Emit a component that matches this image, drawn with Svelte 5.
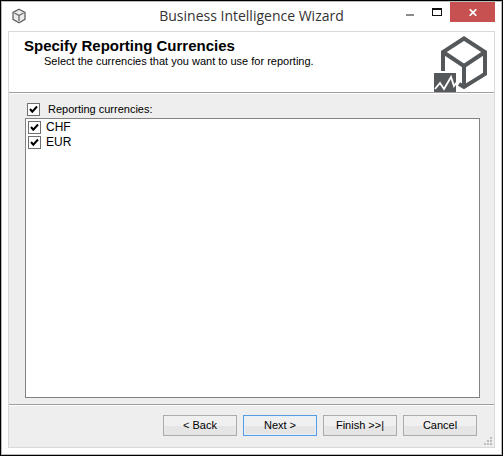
<script>
  let currencies = $state([
    { code: 'CHF', checked: true },
    { code: 'EUR', checked: true }
  ]);
  let useReporting = $state(true);
</script>

<div class="window">
  <header class="titlebar">
    <svg class="app-icon" width="14" height="16" viewBox="0 0 14 16" aria-hidden="true">
      <path d="M7 1.2 13 4.4V11.4L7 14.8 1 11.4V4.4Z" fill="#ececec" stroke="#606060" stroke-width="1.3" />
      <path d="M2.5 5 7 7.5 11.5 5M7 7.5V13" fill="none" stroke="#686868" stroke-width="1.3" />
    </svg>
    <h1>Business Intelligence Wizard</h1>
    <div class="controls">
      <button class="ctl min" aria-label="Minimize">
        <svg width="8" height="2" viewBox="0 0 8 2"><rect width="8" height="2" fill="#8c8c8c" /></svg>
      </button>
      <button class="ctl max" aria-label="Maximize">
        <svg width="10" height="8" viewBox="0 0 10 8"><path d="M0 0H10V8H0ZM1 2V7H9V2Z" fill="#111" fill-rule="evenodd" /></svg>
      </button>
      <button class="ctl close" aria-label="Close">
        <svg width="8" height="7" viewBox="0 0 8 7"><path d="M.7.2 7.3 6.8M7.3.2.7 6.8" stroke="#fff" stroke-width="1.7" /></svg>
      </button>
    </div>
  </header>

  <main class="frame">
    <section class="banner">
      <div class="heading">
        <h2>Specify Reporting Currencies</h2>
        <p>Select the currencies that you want to use for reporting.</p>
      </div>
      <svg class="logo" width="54" height="56" viewBox="0 0 54 56" aria-hidden="true">
        <path d="M9 35V16L30 2.5 51 16V38L30 51 25 48" fill="none" stroke="#54585a" stroke-width="4" />
        <path d="M9 16 30 30 51 16M30 30V51" fill="none" stroke="#54585a" stroke-width="4" />
        <rect x="0" y="35" width="24" height="21" fill="#fff" />
        <rect x="0" y="37" width="22" height="19" fill="#54585a" />
        <path d="M1 53 6 47 10 53 17 41 20 50 23 46" fill="none" stroke="#fff" stroke-width="1.8" />
      </svg>
    </section>

    <section class="content">
      <label class="row all">
        <input type="checkbox" bind:checked={useReporting} />
        <span>Reporting currencies:</span>
      </label>
      <div class="list">
        {#each currencies as currency}
          <label class="row">
            <input type="checkbox" bind:checked={currency.checked} />
            <span>{currency.code}</span>
          </label>
        {/each}
      </div>
    </section>

    <footer class="actions">
      <button class="btn">&lt; Back</button>
      <button class="btn default">Next &gt;</button>
      <button class="btn">Finish &gt;&gt;|</button>
      <button class="btn">Cancel</button>
      <svg class="grip" width="8" height="8" viewBox="0 0 8 8" aria-hidden="true">
        <path d="M6 0h2v2h-2zM3 3h2v2h-2zM6 3h2v2h-2zM0 6h2v2h-2zM3 6h2v2h-2zM6 6h2v2h-2z" fill="#bdbdbd" />
      </svg>
    </footer>
  </main>
</div>

<style>
  :global(body) {
    margin: 0;
    background: #000;
  }
  .window {
    box-sizing: border-box;
    min-height: 100vh;
    display: flex;
    flex-direction: column;
    padding: 0 6px 7px;
    border: 1px solid #000;
    outline: 1px solid #b9b9b9;
    outline-offset: -2px;
    background: #fff;
    color: #000;
    font: 11px/15px "Liberation Sans", Arial, sans-serif;
  }
  .titlebar {
    display: grid;
    grid-template-columns: 104px 1fr 104px;
    height: 30px;
  }
  .app-icon {
    margin: 7px 0 0 5px;
  }
  h1 {
    margin: 0;
    padding-top: 4px;
    text-align: center;
    white-space: nowrap;
    color: #333;
    font: 14px/22px "Open Sans", "Segoe UI", sans-serif;
  }
  .controls {
    display: flex;
    justify-content: flex-end;
    align-items: flex-start;
    padding: 1px 1px 0 0;
  }
  .ctl {
    display: flex;
    align-items: center;
    justify-content: center;
    width: 27px;
    height: 20px;
    padding: 0;
    border: 0;
    background: none;
  }
  .min {
    padding-top: 6px;
  }
  .close {
    width: 45px;
    background: #c75050;
  }
  .frame {
    flex: 1;
    display: flex;
    flex-direction: column;
    margin: 0 1px;
    border: 1px solid #d9d9d9;
    background: #eee;
  }
  .banner {
    display: flex;
    justify-content: space-between;
    height: 60px;
    padding-left: 15px;
    border-bottom: 1px solid #a39da0;
    background: #fff;
  }
  h2 {
    margin: 0;
    padding-top: 6px;
    font-size: 15px;
    line-height: 16px;
  }
  p {
    margin: 0 0 0 20px;
  }
  .logo {
    margin: 4px 6px 0 0;
  }
  .content {
    flex: 1;
    display: flex;
    flex-direction: column;
    padding: 8px 14px 6px 16px;
    border-top: 1px solid #fff;
  }
  .row {
    display: flex;
    align-items: center;
    gap: 5px;
    height: 15px;
  }
  .all {
    gap: 8px;
    padding-left: 2px;
  }
  .list {
    flex: 1;
    margin-top: 1px;
    padding: 1px 2px;
    border: 1px solid #828282;
    background: #fff;
  }
  .list .row {
    font-size: 12px;
  }
  input {
    appearance: none;
    box-sizing: border-box;
    width: 13px;
    height: 13px;
    margin: 0;
    border: 1px solid #707070;
    background: #fff;
  }
  input:checked {
    background: #fff url("data:image/svg+xml,%3Csvg xmlns='http://www.w3.org/2000/svg' viewBox='0 0 11 11'%3E%3Cpath d='M2 5 4.3 7.7 9 2.5' fill='none' stroke='%23000' stroke-width='2'/%3E%3C/svg%3E") center / 11px 11px no-repeat;
  }
  .actions {
    position: relative;
    display: flex;
    justify-content: flex-end;
    gap: 6px;
    padding: 10px 17px 11px;
    border-top: 1px solid #a39da0;
    box-shadow: inset 0 1px #fff;
  }
  .btn {
    box-sizing: border-box;
    width: 74px;
    height: 21px;
    padding: 0;
    border: 1px solid #acacac;
    background: linear-gradient(#f0f0f0 50%, #e5e5e5 50%);
    color: #000;
    font: inherit;
  }
  .default {
    border-color: #569de5;
    box-shadow: inset 0 0 0 1px #e4f1fb;
  }
  .grip {
    position: absolute;
    right: 2px;
    bottom: 2px;
  }
</style>
